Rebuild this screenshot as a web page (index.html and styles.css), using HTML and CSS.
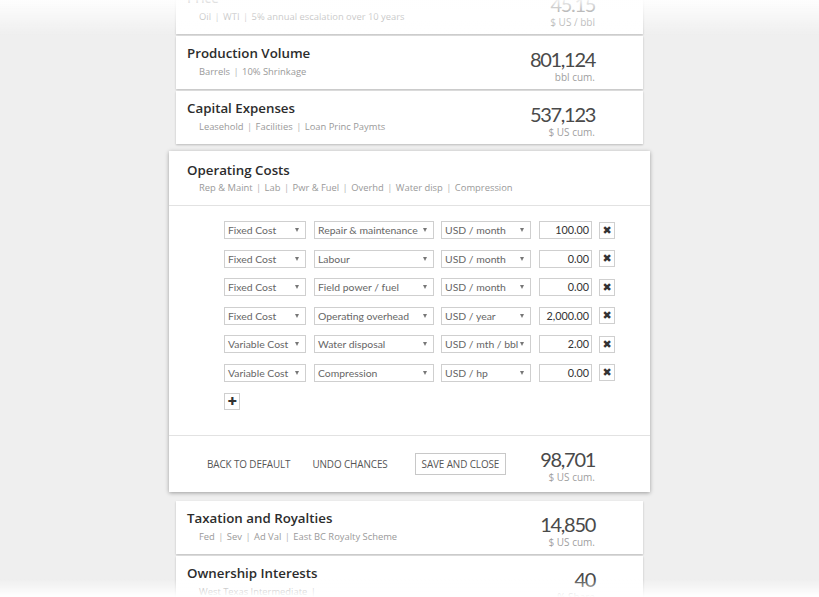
FILE: index.html
```html
<!DOCTYPE html>
<html>
<head>
<meta charset="utf-8">
<link rel="stylesheet" href="styles.css">
</head>
<body>
<div class="list">
  <div class="card">
    <div class="info">
      <div class="title">Price</div>
      <div class="sub">Oil <span class="sep">|</span> WTI <span class="sep">|</span> 5% annual escalation over 10 years</div>
    </div>
    <div class="metric"><div class="value">45.15</div><div class="unit">$ US / bbl</div></div>
  </div>
  <div class="card">
    <div class="info">
      <div class="title">Production Volume</div>
      <div class="sub">Barrels <span class="sep">|</span> 10% Shrinkage</div>
    </div>
    <div class="metric"><div class="value">801,124</div><div class="unit">bbl cum.</div></div>
  </div>
  <div class="card">
    <div class="info">
      <div class="title">Capital Expenses</div>
      <div class="sub">Leasehold <span class="sep">|</span> Facilities <span class="sep">|</span> Loan Princ Paymts</div>
    </div>
    <div class="metric"><div class="value">537,123</div><div class="unit">$ US cum.</div></div>
  </div>

  <div class="card-open">
    <div class="open-head">
      <div class="title">Operating Costs</div>
      <div class="sub">Rep &amp; Maint <span class="sep">|</span> Lab <span class="sep">|</span> Pwr &amp; Fuel <span class="sep">|</span> Overhd <span class="sep">|</span> Water disp <span class="sep">|</span> Compression</div>
    </div>
    <div class="open-body">
      <div class="row">
        <div class="sel s1">Fixed Cost</div>
        <div class="sel s2">Repair &amp; maintenance</div>
        <div class="sel s3">USD / month</div>
        <div class="num">100.00</div>
        <div class="xbtn">✖</div>
      </div>
      <div class="row">
        <div class="sel s1">Fixed Cost</div>
        <div class="sel s2">Labour</div>
        <div class="sel s3">USD / month</div>
        <div class="num">0.00</div>
        <div class="xbtn">✖</div>
      </div>
      <div class="row">
        <div class="sel s1">Fixed Cost</div>
        <div class="sel s2">Field power / fuel</div>
        <div class="sel s3">USD / month</div>
        <div class="num">0.00</div>
        <div class="xbtn">✖</div>
      </div>
      <div class="row">
        <div class="sel s1">Fixed Cost</div>
        <div class="sel s2">Operating overhead</div>
        <div class="sel s3">USD / year</div>
        <div class="num">2,000.00</div>
        <div class="xbtn">✖</div>
      </div>
      <div class="row">
        <div class="sel s1">Variable Cost</div>
        <div class="sel s2">Water disposal</div>
        <div class="sel s3">USD / mth / bbl</div>
        <div class="num">2.00</div>
        <div class="xbtn">✖</div>
      </div>
      <div class="row">
        <div class="sel s1">Variable Cost</div>
        <div class="sel s2">Compression</div>
        <div class="sel s3">USD / hp</div>
        <div class="num">0.00</div>
        <div class="xbtn">✖</div>
      </div>
      <div class="plus">✚</div>
    </div>
    <div class="open-foot">
      <div class="btn b1">BACK TO DEFAULT</div>
      <div class="btn b2">UNDO CHANCES</div>
      <div class="btn save">SAVE AND CLOSE</div>
      <div class="metric foot-metric"><div class="value">98,701</div><div class="unit">$ US cum.</div></div>
    </div>
  </div>

  <div class="card">
    <div class="info">
      <div class="title">Taxation and Royalties</div>
      <div class="sub">Fed <span class="sep">|</span> Sev <span class="sep">|</span> Ad Val <span class="sep">|</span> East BC Royalty Scheme</div>
    </div>
    <div class="metric"><div class="value">14,850</div><div class="unit">$ US cum.</div></div>
  </div>
  <div class="card">
    <div class="info">
      <div class="title">Ownership Interests</div>
      <div class="sub">West Texas Intermediate <span class="sep">|</span></div>
    </div>
    <div class="metric"><div class="value">40</div><div class="unit">% Share</div></div>
  </div>
</div>
<div class="fade-top"></div>
<div class="fade-bottom"></div>
</body>
</html>
```

FILE: styles.css
```css
html, body {
  margin: 0;
  padding: 0;
  background: #efefef;
  height: 100%;
  overflow: hidden;
}
body {
  font-family: "Open Sans", "Liberation Sans", sans-serif;
  color: #333;
}
.list {
  width: 467px;
  margin: -19px auto 0;
  display: flex;
  flex-direction: column;
  gap: 2px;
}
.card {
  background: #fff;
  box-shadow: 0 1px 2px rgba(0,0,0,0.22);
  display: flex;
  justify-content: space-between;
  align-items: flex-start;
  padding: 9px 48px 8px 11px;
  height: 36px;
}
.title {
  font-size: 13.3px;
  font-weight: 600;
  line-height: 17px;
  color: #2c2c2c;
}
.sub {
  font-size: 9.4px;
  line-height: 14px;
  margin-top: 3px;
  padding-left: 12px;
  color: #9a9a9a;
}
.sep {
  margin: 0 1px;
  color: #b5b5b5;
}
.metric {
  text-align: right;
  margin-top: 5px;
}
.value {
  font-family: "Lato", sans-serif;
  font-size: 20px;
  font-weight: 400;
  line-height: 18px;
  color: #4a4a4a;
  letter-spacing: -1.3px;
}
.unit {
  font-size: 10px;
  line-height: 12px;
  margin-top: 3px;
  color: #a0a0a0;
}
.card-open {
  background: #fff;
  margin: 5px -7px 7px;
  box-shadow: 0 1px 4px rgba(0,0,0,0.35);
}
.open-head {
  padding: 11px 18px 10px;
  border-bottom: 1px solid #e2e2e2;
}
.open-head .sub {
  margin-top: 2px;
}
.open-body {
  padding: 15px 0 25px 55px;
  display: flex;
  flex-direction: column;
  gap: 10.5px;
  border-bottom: 1px solid #e2e2e2;
}
.row {
  display: flex;
  align-items: center;
  height: 18px;
}
.sel {
  box-sizing: border-box;
  height: 18px;
  border: 1px solid #cfcfcf;
  font-family: "Lato", sans-serif;
  font-size: 10.4px;
  line-height: 16px;
  color: #666;
  padding-left: 3px;
  position: relative;
  margin-right: 8px;
}
.sel::after {
  content: "";
  position: absolute;
  right: 6px;
  top: 6px;
  border-left: 2.5px solid transparent;
  border-right: 2.5px solid transparent;
  border-top: 4px solid #777;
}
.s1 { width: 82px; }
.s2 { width: 120px; margin-right: 7px; }
.s3 { width: 90px; }
.num {
  box-sizing: border-box;
  width: 53px;
  height: 18px;
  border: 1px solid #cfcfcf;
  font-family: "Lato", sans-serif;
  font-size: 10.8px;
  line-height: 16px;
  color: #333;
  text-align: right;
  padding-right: 2px;
  margin-right: 7px;
}
.xbtn, .plus {
  box-sizing: border-box;
  width: 16px;
  height: 17px;
  border: 1px solid #cfcfcf;
  font-size: 11px;
  line-height: 15px;
  text-align: center;
  color: #333;
  font-family: "DejaVu Sans", sans-serif;
}
.plus {
  margin-top: 0.5px;
}
.open-foot {
  display: flex;
  align-items: center;
  height: 56px;
  padding: 0 55px 0 31px;
}
.btn {
  font-size: 9.9px;
  color: #555;
  padding: 4px 6px;
  border: 1px solid transparent;
  line-height: 12px;
  letter-spacing: -0.1px;
}
.b1 { margin-right: 8px; }
.b2 { margin-right: 20px; }
.save {
  border-color: #c8c8c8;
}
.foot-metric {
  margin-left: auto;
  margin-top: 6px;
}
.fade-top {
  position: fixed;
  left: 0; right: 0; top: 0;
  height: 36px;
  background: linear-gradient(to bottom, rgba(255,255,255,0.92), rgba(255,255,255,0));
  pointer-events: none;
}
.fade-bottom {
  position: fixed;
  left: 0; right: 0; bottom: 0;
  height: 18px;
  background: linear-gradient(to top, rgba(255,255,255,0.97), rgba(255,255,255,0));
  pointer-events: none;
}
```
